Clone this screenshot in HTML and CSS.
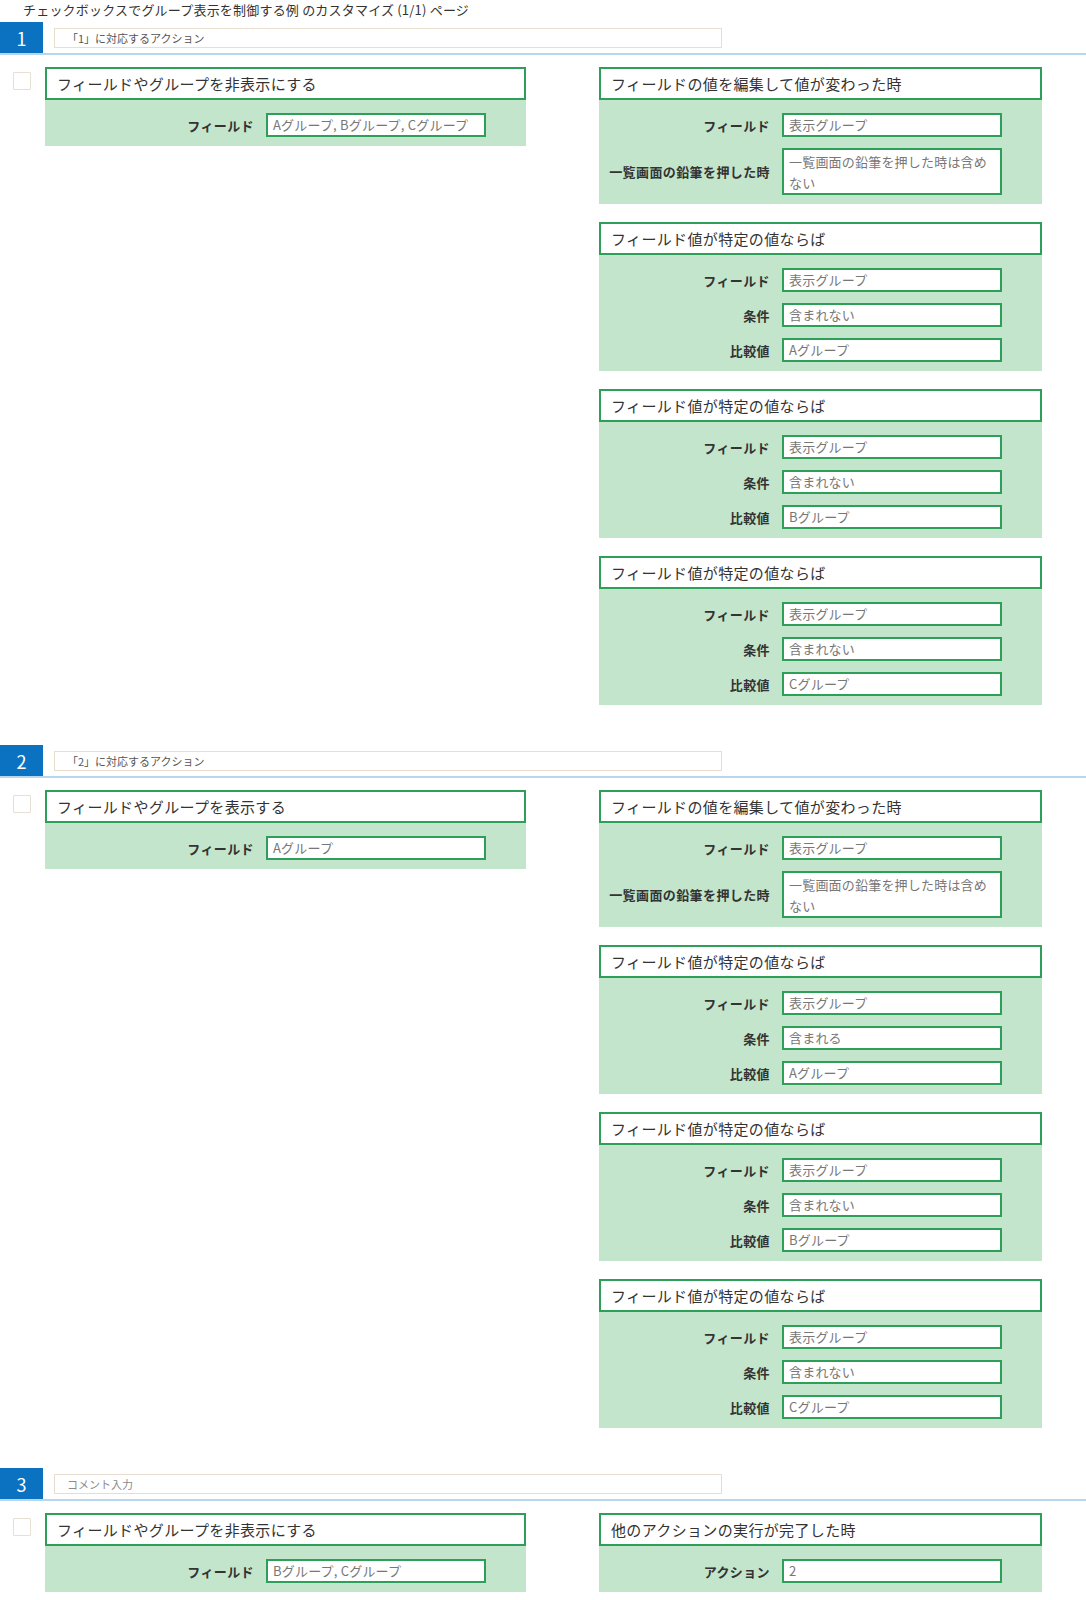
FILE: index.html
```html
<!DOCTYPE html>
<html lang="ja">
<head>
<meta charset="utf-8">
<title>カスタマイズ</title>
<link rel="stylesheet" href="styles.css">
</head>
<body>
<div class="title">チェックボックスでグループ表示を制御する例 のカスタマイズ (1/1) ページ</div>

<section class="sec">
  <div class="sec-head"><div class="num">1</div><div class="comment">「1」に対応するアクション</div></div>
  <div class="sec-body">
    <div class="check"></div>
    <div class="col-left">
      <div class="card">
        <div class="card-head">フィールドやグループを非表示にする</div>
        <div class="card-body">
          <div class="row"><div class="label">フィールド</div><div class="field">Aグループ, Bグループ, Cグループ</div></div>
        </div>
      </div>
    </div>
    <div class="col-right">
      <div class="card">
        <div class="card-head">フィールドの値を編集して値が変わった時</div>
        <div class="card-body">
          <div class="row"><div class="label">フィールド</div><div class="field">表示グループ</div></div>
          <div class="row"><div class="label">一覧画面の鉛筆を押した時</div><div class="field multi">一覧画面の鉛筆を押した時は含めない</div></div>
        </div>
      </div>
      <div class="card">
        <div class="card-head">フィールド値が特定の値ならば</div>
        <div class="card-body">
          <div class="row"><div class="label">フィールド</div><div class="field">表示グループ</div></div>
          <div class="row"><div class="label">条件</div><div class="field">含まれない</div></div>
          <div class="row"><div class="label">比較値</div><div class="field">Aグループ</div></div>
        </div>
      </div>
      <div class="card">
        <div class="card-head">フィールド値が特定の値ならば</div>
        <div class="card-body">
          <div class="row"><div class="label">フィールド</div><div class="field">表示グループ</div></div>
          <div class="row"><div class="label">条件</div><div class="field">含まれない</div></div>
          <div class="row"><div class="label">比較値</div><div class="field">Bグループ</div></div>
        </div>
      </div>
      <div class="card">
        <div class="card-head">フィールド値が特定の値ならば</div>
        <div class="card-body">
          <div class="row"><div class="label">フィールド</div><div class="field">表示グループ</div></div>
          <div class="row"><div class="label">条件</div><div class="field">含まれない</div></div>
          <div class="row"><div class="label">比較値</div><div class="field">Cグループ</div></div>
        </div>
      </div>
    </div>
  </div>
</section>

<section class="sec">
  <div class="sec-head"><div class="num">2</div><div class="comment">「2」に対応するアクション</div></div>
  <div class="sec-body">
    <div class="check"></div>
    <div class="col-left">
      <div class="card">
        <div class="card-head">フィールドやグループを表示する</div>
        <div class="card-body">
          <div class="row"><div class="label">フィールド</div><div class="field">Aグループ</div></div>
        </div>
      </div>
    </div>
    <div class="col-right">
      <div class="card">
        <div class="card-head">フィールドの値を編集して値が変わった時</div>
        <div class="card-body">
          <div class="row"><div class="label">フィールド</div><div class="field">表示グループ</div></div>
          <div class="row"><div class="label">一覧画面の鉛筆を押した時</div><div class="field multi">一覧画面の鉛筆を押した時は含めない</div></div>
        </div>
      </div>
      <div class="card">
        <div class="card-head">フィールド値が特定の値ならば</div>
        <div class="card-body">
          <div class="row"><div class="label">フィールド</div><div class="field">表示グループ</div></div>
          <div class="row"><div class="label">条件</div><div class="field">含まれる</div></div>
          <div class="row"><div class="label">比較値</div><div class="field">Aグループ</div></div>
        </div>
      </div>
      <div class="card">
        <div class="card-head">フィールド値が特定の値ならば</div>
        <div class="card-body">
          <div class="row"><div class="label">フィールド</div><div class="field">表示グループ</div></div>
          <div class="row"><div class="label">条件</div><div class="field">含まれない</div></div>
          <div class="row"><div class="label">比較値</div><div class="field">Bグループ</div></div>
        </div>
      </div>
      <div class="card">
        <div class="card-head">フィールド値が特定の値ならば</div>
        <div class="card-body">
          <div class="row"><div class="label">フィールド</div><div class="field">表示グループ</div></div>
          <div class="row"><div class="label">条件</div><div class="field">含まれない</div></div>
          <div class="row"><div class="label">比較値</div><div class="field">Cグループ</div></div>
        </div>
      </div>
    </div>
  </div>
</section>

<section class="sec">
  <div class="sec-head"><div class="num">3</div><div class="comment placeholder">コメント入力</div></div>
  <div class="sec-body">
    <div class="check"></div>
    <div class="col-left">
      <div class="card">
        <div class="card-head">フィールドやグループを非表示にする</div>
        <div class="card-body">
          <div class="row"><div class="label">フィールド</div><div class="field">Bグループ, Cグループ</div></div>
        </div>
      </div>
    </div>
    <div class="col-right">
      <div class="card">
        <div class="card-head">他のアクションの実行が完了した時</div>
        <div class="card-body">
          <div class="row"><div class="label">アクション</div><div class="field">2</div></div>
        </div>
      </div>
    </div>
  </div>
</section>
</body>
</html>
```

FILE: styles.css
```css
* { box-sizing: border-box; }
html, body { margin: 0; padding: 0; background: #fff; }
body {
  font-family: "Noto Sans CJK JP", "Noto Sans", sans-serif;
  color: #333;
}
.title {
  height: 22px;
  padding-left: 23px;
  font-size: 13px;
  letter-spacing: 0.2px;
  line-height: 20px;
  color: #333;
}
.sec { margin-bottom: 40px; }
.sec:last-child { margin-bottom: 0; }
.sec-head {
  display: flex;
  align-items: flex-start;
  border-bottom: 2px solid #b6d7ee;
}
.num {
  width: 43px;
  height: 31px;
  background: #0b72c1;
  color: #fff;
  font-size: 18px;
  line-height: 33px;
  text-align: center;
}
.comment {
  margin-left: 11px;
  margin-top: 6px;
  width: 668px;
  height: 20px;
  border: 1px solid #e8ddcf;
  padding-left: 12px;
  font-size: 11px;
  line-height: 19px;
  color: #555;
}
.comment.placeholder { color: #8a8a8a; }
.sec-body {
  display: flex;
  align-items: flex-start;
  padding: 12px 0 0 13px;
}
.check {
  width: 18px;
  height: 18px;
  margin-top: 5px;
  margin-right: 14px;
  border: 1.5px solid #e6dfd4;
  border-radius: 1px;
  flex: none;
}
.col-left { width: 481px; margin-right: 73px; flex: none; }
.col-right {
  width: 443px;
  flex: none;
  display: flex;
  flex-direction: column;
  gap: 18px;
}
.card-head {
  height: 33px;
  border: 2px solid #2e9f58;
  background: #fff;
  padding: 0 10px;
  font-size: 15px;
  letter-spacing: 0.35px;
  line-height: 30px;
  color: #333;
}
.card-body {
  background: #c3e5cb;
  padding: 13px 40px 9px 0;
  display: flex;
  flex-direction: column;
  gap: 11px;
}
.row {
  display: flex;
  align-items: center;
}
.label {
  flex: 1;
  text-align: right;
  margin-right: 12px;
  font-size: 13px;
  font-weight: 700;
  letter-spacing: 0.4px;
  color: #333;
  white-space: nowrap;
}
.field {
  width: 220px;
  flex: none;
  background: #fff;
  border: 2px solid #2e9f58;
  padding: 0 5px;
  font-size: 13px;
  letter-spacing: 0.2px;
  line-height: 20px;
  color: #777;
}
.field.multi {
  line-height: 21px;
  padding-top: 1px;
}
```
